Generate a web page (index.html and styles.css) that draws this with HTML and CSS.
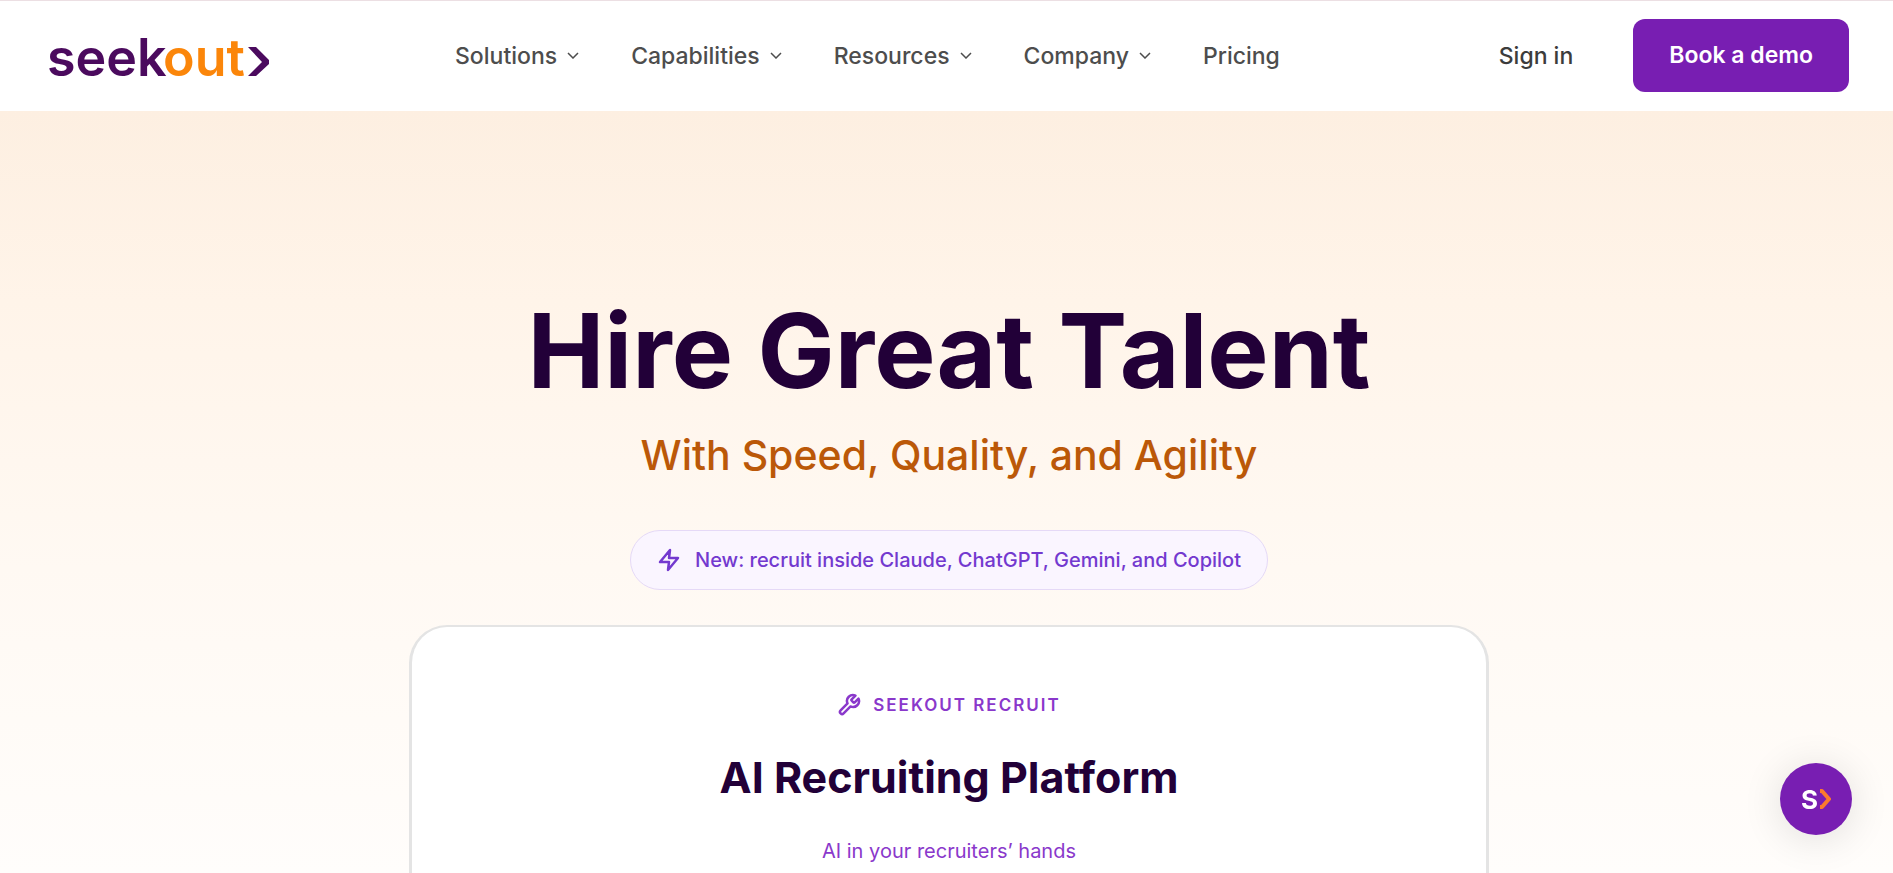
FILE: index.html
```html
<!DOCTYPE html>
<html lang="en">

<head>
    <meta charset="UTF-8">
    <meta name="viewport" content="width=device-width, initial-scale=1.0">
    <title>SeekOut</title>
    <link rel="stylesheet" href="styles.css">
</head>

<body>
    <header class="site-header">
        <a class="logo" href="#" aria-label="seekout">
            <svg width="222" height="72" viewBox="0 0 222 72">
                <text class="logo-seek" x="-2" y="56">seek</text>
                <text class="logo-out" x="114" y="56">out</text>
                <path d="M199 27h8l13 13v4l-13 12h-8l14-14z" fill="#4b0a5e" />
            </svg>
        </a>

        <nav class="main-nav">
            <button type="button">Solutions
                <svg width="12" height="7" viewBox="0 0 12 7"><path d="M1 1l5 5 5-5" /></svg>
            </button>
            <button type="button">Capabilities
                <svg width="12" height="7" viewBox="0 0 12 7"><path d="M1 1l5 5 5-5" /></svg>
            </button>
            <button type="button">Resources
                <svg width="12" height="7" viewBox="0 0 12 7"><path d="M1 1l5 5 5-5" /></svg>
            </button>
            <button type="button">Company
                <svg width="12" height="7" viewBox="0 0 12 7"><path d="M1 1l5 5 5-5" /></svg>
            </button>
            <a href="#">Pricing</a>
        </nav>

        <div class="header-actions">
            <a class="sign-in" href="#">Sign in</a>
            <a class="demo-button" href="#">Book a demo</a>
        </div>
    </header>

    <main class="hero">
        <h1>Hire Great Talent</h1>
        <p class="tagline">With Speed, Quality, and Agility</p>

        <a class="news-pill" href="#">
            <svg width="24" height="24" viewBox="0 0 24 24">
                <path d="M13 2L3 14h9l-1 8 10-12h-9l1-8z" />
            </svg>
            New: recruit inside Claude, ChatGPT, Gemini, and Copilot
        </a>

        <section class="card">
            <p class="card-label">
                <svg width="24" height="24" viewBox="0 0 24 24">
                    <path d="M14.700 6.300a1 1 0 0 0 0 1.400l1.600 1.600a1 1 0 0 0 1.400 0l3.770-3.770a6 6 0 0 1-7.940 7.940l-6.910 6.910a2.120 2.120 0 0 1-3-3l6.910-6.910a6 6 0 0 1 7.940-7.940l-3.760 3.760z" />
                </svg>
                SEEKOUT RECRUIT
            </p>
            <h2>AI Recruiting Platform</h2>
            <p class="card-text">AI in your recruiters’ hands</p>
        </section>
    </main>

    <button class="chat-button" type="button" aria-label="Open chat">
        <span>S</span>
        <svg width="13" height="20" viewBox="0 0 13 20"><path d="M2 2h2l7 8-7 8H2" /></svg>
    </button>
</body>

</html>
```
FILE: styles.css
```css
* {
    box-sizing: border-box;
}

body {
    margin: 0;
    min-height: 100vh;
    display: flex;
    flex-direction: column;
    font-family: Inter, "Liberation Sans", sans-serif;
    background-color: #fffdfb;
}

h1,
h2,
p {
    margin: 0;
}

a {
    text-decoration: none;
}

.site-header {
    display: flex;
    align-items: center;
    height: 111px;
    padding: 0 44px 1px 49px;
    border-top: 1px solid #ecdfe3;
    background-color: #fff;
}

.logo svg {
    display: block;
    overflow: visible;
}

.logo text {
    font-size: 52px;
    font-weight: 600;
}

.logo-seek {
    fill: #4b0a5e;
}

.logo-out {
    fill: #fb860a;
}

.main-nav {
    display: flex;
    align-items: center;
    gap: 52px;
    margin-left: 184px;
}

.main-nav button,
.main-nav a {
    display: flex;
    align-items: center;
    gap: 10px;
    padding: 0;
    border: 0;
    background: none;
    font-family: inherit;
    font-size: 23px;
    font-weight: 500;
    line-height: 32px;
    color: #4d4d4d;
}

.main-nav svg {
    fill: none;
    stroke: #4d4d4d;
    stroke-width: 1.5;
}

.header-actions {
    display: flex;
    align-items: center;
    gap: 60px;
    margin-left: auto;
    font-size: 23px;
    font-weight: 500;
}

.sign-in {
    color: #3c3c3c;
}

.demo-button {
    padding: 20px 36px;
    border-radius: 12px;
    background-color: #781eb2;
    color: #fff;
    font-weight: 600;
    line-height: 33px;
}

.hero {
    flex: 1;
    display: flex;
    flex-direction: column;
    align-items: center;
    padding: 176px 0 0 5px;
    background: linear-gradient(#fdefe1, #fff4e9 25%, #fff9f3 60%, #fffdfb);
}

h1 {
    font-size: 103px;
    font-weight: 700;
    line-height: 128px;
    color: #220038;
}

.tagline {
    margin-top: 15px;
    font-size: 41px;
    font-weight: 500;
    line-height: 50px;
    color: #bb5808;
}

.news-pill {
    display: flex;
    align-items: center;
    gap: 14px;
    margin-top: 50px;
    padding: 13px 26px;
    border: 1px solid #e5d9f7;
    border-radius: 30px;
    background-color: #faf5ff;
    font-size: 20px;
    font-weight: 500;
    line-height: 32px;
    color: #7339cf;
}

.news-pill svg,
.card-label svg {
    fill: none;
    stroke: currentColor;
    stroke-width: 2.5;
    stroke-linecap: round;
    stroke-linejoin: round;
}

.card {
    flex: 1;
    width: 57.2%;
    margin-top: 35px;
    padding: 64px 40px 0;
    border: 3px solid #e4e4e4;
    border-top-width: 2px;
    border-bottom: 0;
    border-radius: 38px 38px 0 0;
    background-color: #fff;
    text-align: center;
}

.card-label {
    display: flex;
    align-items: center;
    justify-content: center;
    gap: 12px;
    font-size: 17px;
    font-weight: 600;
    line-height: 28px;
    letter-spacing: 2px;
    color: #8a38cb;
}

h2 {
    margin-top: 32px;
    font-size: 43px;
    font-weight: 700;
    line-height: 52px;
    color: #220038;
}

.card-text {
    margin-top: 32px;
    font-size: 20px;
    line-height: 32px;
    color: #8a38cb;
}

.chat-button {
    position: fixed;
    right: 41px;
    bottom: 38px;
    display: flex;
    align-items: center;
    justify-content: center;
    width: 72px;
    height: 72px;
    padding: 0;
    border: 0;
    border-radius: 50%;
    background-color: #781eb2;
    box-shadow: 0 4px 40px rgba(0, 0, 0, 0.12);
    color: #fff;
    font-family: inherit;
    font-size: 26px;
    font-weight: 700;
}

.chat-button svg {
    fill: none;
    stroke: #fb7a2c;
    stroke-width: 4;
    stroke-linejoin: round;
}
```
